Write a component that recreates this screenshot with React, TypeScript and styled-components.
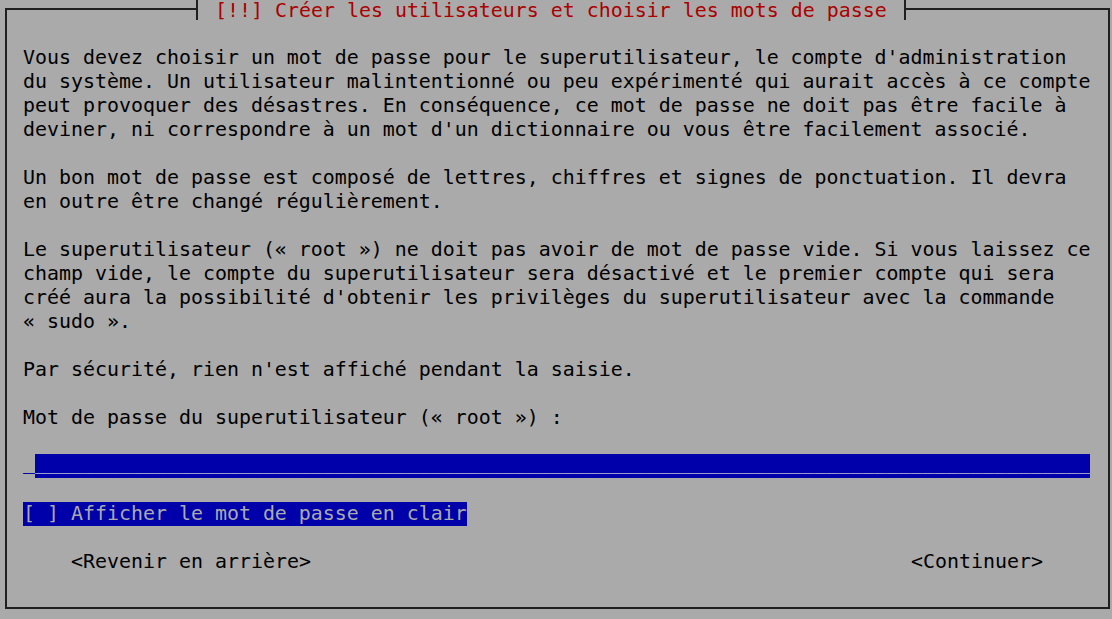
import React, { FC } from "react";
import styled, { createGlobalStyle } from "styled-components";

const GlobalStyle = createGlobalStyle`
  html, body {
    margin: 0;
    padding: 0;
    background: #aaaaaa;
  }
`;

const Screen = styled.div`
  width: 1112px;
  height: 619px;
  overflow: hidden;
  background: #aaaaaa;
  font-family: "DejaVu Sans Mono", "Liberation Mono", monospace;
  font-size: 19.93px;
  line-height: 24px;
  color: #000;
`;

const Frame = styled.div`
  position: relative;
  box-sizing: border-box;
  margin: 8px 0 0 5px;
  width: 1105px;
  height: 601px;
  border: 2px solid #202020;
  padding: 36px 17px 0 16px;
  display: flex;
  flex-direction: column;
  gap: 24px;
`;

const TitleBar = styled.div`
  position: absolute;
  top: -11px;
  left: 184px;
  display: flex;
  align-items: flex-start;
`;

const Tick = styled.span<{ side: "left" | "right" }>`
  width: 12px;
  height: 21px;
  background: ${({ side }) =>
    side === "left"
      ? "linear-gradient(to right, transparent 5px, #202020 5px, #202020 7px, #aaaaaa 7px)"
      : "linear-gradient(to right, #aaaaaa 5px, #202020 5px, #202020 7px, transparent 7px)"};
`;

const TitleText = styled.span`
  background: #aaaaaa;
  color: #aa0000;
  white-space: pre;
`;

const Paragraph = styled.div`
  white-space: pre;
`;

const InputRow = styled.div`
  display: flex;
  height: 24px;
  white-space: pre;
`;

const Cell = styled.span<{ filled?: boolean }>`
  display: block;
  line-height: 18px;
  padding-bottom: 6px;
  background: ${({ filled }) => (filled ? "#0000aa" : "transparent")};
  color: ${({ filled }) => (filled ? "#9a9ad0" : "#0000aa")};
`;

const CheckRow = styled.div`
  display: flex;
`;

const Highlight = styled.span`
  background: #0000aa;
  color: #aaaaaa;
  white-space: pre;
`;

const ButtonRow = styled.div`
  display: flex;
  justify-content: space-between;
  padding: 0 48px;
  white-space: pre;
`;

const Button = styled.span`
  color: #000;
`;

const paragraphs: string[][] = [
  [
    "Vous devez choisir un mot de passe pour le superutilisateur, le compte d'administration",
    "du système. Un utilisateur malintentionné ou peu expérimenté qui aurait accès à ce compte",
    "peut provoquer des désastres. En conséquence, ce mot de passe ne doit pas être facile à",
    "deviner, ni correspondre à un mot d'un dictionnaire ou vous être facilement associé.",
  ],
  [
    "Un bon mot de passe est composé de lettres, chiffres et signes de ponctuation. Il devra",
    "en outre être changé régulièrement.",
  ],
  [
    "Le superutilisateur (« root ») ne doit pas avoir de mot de passe vide. Si vous laissez ce",
    "champ vide, le compte du superutilisateur sera désactivé et le premier compte qui sera",
    "créé aura la possibilité d'obtenir les privilèges du superutilisateur avec la commande",
    "« sudo ».",
  ],
  ["Par sécurité, rien n'est affiché pendant la saisie."],
  ["Mot de passe du superutilisateur (« root ») :"],
];

const App: FC = () => {
  return (
    <Screen>
      <GlobalStyle />
      <Frame>
        <TitleBar>
          <Tick side="left" />
          <TitleText> [!!] Créer les utilisateurs et choisir les mots de passe </TitleText>
          <Tick side="right" />
        </TitleBar>
        {paragraphs.map((lines, i) => (
          <Paragraph key={i}>{lines.join("\n")}</Paragraph>
        ))}
        <InputRow>
          <Cell>_</Cell>
          <Cell filled>{"_".repeat(88)}</Cell>
        </InputRow>
        <CheckRow>
          <Highlight>[ ] Afficher le mot de passe en clair</Highlight>
        </CheckRow>
        <ButtonRow>
          <Button>&lt;Revenir en arrière&gt;</Button>
          <Button>&lt;Continuer&gt;</Button>
        </ButtonRow>
      </Frame>
    </Screen>
  );
};

export default App;
